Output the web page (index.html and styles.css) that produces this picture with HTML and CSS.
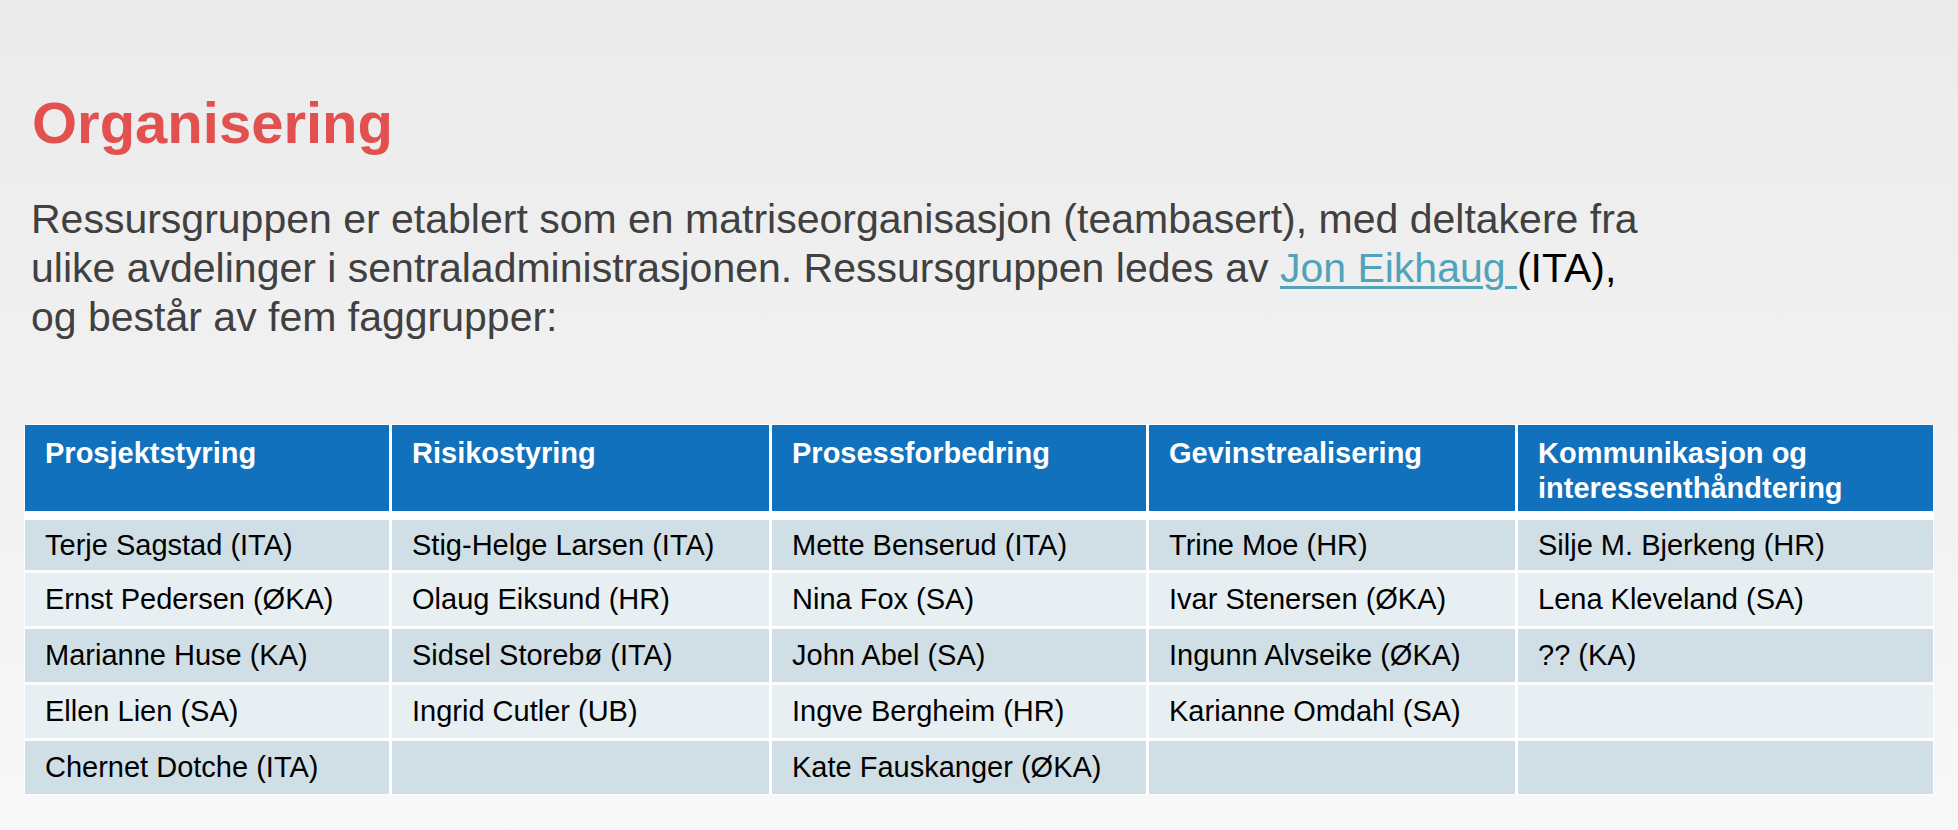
FILE: index.html
```html
<!DOCTYPE html>
<html lang="no">
<head>
<meta charset="utf-8">
<title>Organisering</title>
<link rel="stylesheet" href="styles.css">
</head>
<body>
<main class="slide">
  <h1 class="title">Organisering</h1>
  <p class="intro">Ressursgruppen er etablert som en matriseorganisasjon (teambasert), med deltakere fra ulike avdelinger i sentraladministrasjonen. Ressursgruppen ledes av <a class="link" href="#">Jon Eikhaug </a><span class="dark">(ITA),</span> og består av fem faggrupper:</p>

  <div class="groups">
    <div class="head">Prosjektstyring</div>
    <div class="head">Risikostyring</div>
    <div class="head">Prosessforbedring</div>
    <div class="head">Gevinstrealisering</div>
    <div class="head">Kommunikasjon og interessenthåndtering</div>

    <div class="cell odd">Terje Sagstad (ITA)</div>
    <div class="cell odd">Stig-Helge Larsen (ITA)</div>
    <div class="cell odd">Mette Benserud (ITA)</div>
    <div class="cell odd">Trine Moe (HR)</div>
    <div class="cell odd">Silje M. Bjerkeng (HR)</div>

    <div class="cell even">Ernst Pedersen (ØKA)</div>
    <div class="cell even">Olaug Eiksund (HR)</div>
    <div class="cell even">Nina Fox (SA)</div>
    <div class="cell even">Ivar Stenersen (ØKA)</div>
    <div class="cell even">Lena Kleveland (SA)</div>

    <div class="cell odd">Marianne Huse (KA)</div>
    <div class="cell odd">Sidsel Storebø (ITA)</div>
    <div class="cell odd">John Abel (SA)</div>
    <div class="cell odd">Ingunn Alvseike (ØKA)</div>
    <div class="cell odd">?? (KA)</div>

    <div class="cell even">Ellen Lien (SA)</div>
    <div class="cell even">Ingrid Cutler (UB)</div>
    <div class="cell even">Ingve Bergheim (HR)</div>
    <div class="cell even">Karianne Omdahl (SA)</div>
    <div class="cell even"></div>

    <div class="cell odd">Chernet Dotche (ITA)</div>
    <div class="cell odd"></div>
    <div class="cell odd">Kate Fauskanger (ØKA)</div>
    <div class="cell odd"></div>
    <div class="cell odd"></div>
  </div>
</main>
</body>
</html>
```

FILE: styles.css
```css
html {
  min-height: 100%;
  background: linear-gradient(to bottom, #ebebeb 0%, #f1f1f1 50%, #f8f8f8 100%);
}

body {
  margin: 0;
  min-height: 830px;
  font-family: "Liberation Sans", Arial, Helvetica, sans-serif;
}

.slide {
  padding: 94px 24px 0 24px;
}

.title {
  margin: 0 0 43px 8px;
  font-size: 58px;
  line-height: 58px;
  font-weight: bold;
  color: #e25150;
}

.intro {
  margin: 0 0 82px 7px;
  width: 1640px;
  font-size: 41px;
  line-height: 49px;
  color: #404040;
}

.link {
  color: #52a3b9;
  text-decoration: underline;
  text-decoration-thickness: 3px;
  text-underline-offset: 4px;
}

.dark {
  color: #000;
}

.groups {
  display: grid;
  grid-template-columns: 364px 377px 374px 366px 415px;
  grid-template-rows: 92px 50px repeat(4, 53px);
  column-gap: 3px;
  row-gap: 3px;
  width: max-content;
  padding: 1px;
  background: #ffffff;
}

.head {
  box-sizing: border-box;
  margin-bottom: 6px;
  padding: 11px 20px 0 20px;
  background: #1271bc;
  color: #ffffff;
  font-size: 29px;
  line-height: 35px;
  font-weight: bold;
}

.cell {
  display: flex;
  align-items: center;
  padding: 0 20px;
  font-size: 29px;
  line-height: 35px;
  color: #000;
}

.odd {
  background: #d0dfe6;
}

.even {
  background: #e8eff2;
}
```
